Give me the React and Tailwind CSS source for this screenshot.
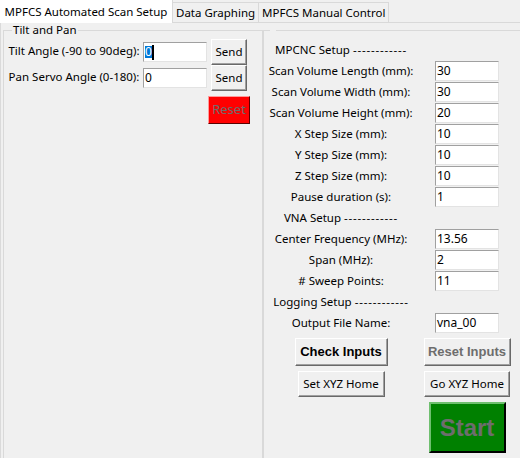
import React from "react";

const ui = "font-['Noto_Sans',sans-serif] text-[11.5px] text-black";

const Entry = ({ value, selected }) => (
  <div className="w-[64px] h-[20px] bg-white border border-[#a0a0a0] border-r-[#e3e3e3] border-b-[#e3e3e3] flex items-center pl-[1px] leading-none text-[12px]">
    {selected ? (
      <>
        <span className="bg-[#0078d7] text-white">{value}</span>
        <span className="w-[2px] h-[15px] bg-black" />
      </>
    ) : (
      <span>{value}</span>
    )}
  </div>
);

const TkButton = ({ children, className = "" }) => (
  <div
    className={`flex items-center justify-center bg-[#f0f0f0] border border-t-white border-l-white border-b-[#696969] border-r-[#696969] shadow-[inset_-1px_-1px_0_#a0a0a0] ${className}`}
  >
    {children}
  </div>
);

const Row = ({ label, value }) => (
  <div className="flex h-[21px]">
    <div className="w-[150px] text-center leading-[20px] whitespace-nowrap">{label}</div>
    <div className="w-[102px] flex justify-center">
      <Entry value={value} />
    </div>
  </div>
);

const Heading = ({ text }) => (
  <div className="flex h-[21px]">
    <div className="w-[150px] text-center leading-[20px] whitespace-nowrap">
      {text} <span className="tracking-[0.8px]">------------</span>
    </div>
  </div>
);

export default function App() {
  const tabs = ["Data Graphing", "MPFCS Manual Control"];

  return (
    <div className={`${ui} w-[520px] h-[458px] overflow-hidden bg-[#f0f0f0]`}>
      {/* tab strip */}
      <div className="flex h-[23px] border-b border-[#d9d9d9]">
        <div className="w-[173px] h-[23px] bg-white border-r border-[#d9d9d9] flex items-center justify-center -mb-px">
          MPFCS Automated Scan Setup
        </div>
        {tabs.map((t) => (
          <div
            key={t}
            className="mt-[2px] h-[20px] px-[3px] border-t border-r border-[#d9d9d9] bg-[#f0f0f0] flex items-center"
          >
            {t}
          </div>
        ))}
      </div>

      <div className="flex border-l border-[#dadada] pl-[2px] h-[440px]">
        {/* Tilt and Pan */}
        <fieldset className="w-[260px] h-[440px] border border-[#d9d9d9]">
          <legend className="ml-[8px] px-[1px] leading-[14px]">Tilt and Pan</legend>
          <div className="pl-[1px] pt-[2px]">
            <div className="flex h-[26px] items-start">
              <div className="w-[138px] text-center leading-[24px] whitespace-nowrap">Tilt Angle (-90 to 90deg):</div>
              <div className="w-[64px] pt-[3px]">
                <Entry value="0" selected />
              </div>
              <div className="w-[44px] flex justify-center">
                <TkButton className="w-[36px] h-[26px]">Send</TkButton>
              </div>
            </div>
            <div className="flex h-[26px] items-start">
              <div className="w-[138px] text-center leading-[24px] whitespace-nowrap">Pan Servo Angle (0-180):</div>
              <div className="w-[64px] pt-[3px]">
                <Entry value="0" />
              </div>
              <div className="w-[44px] flex justify-center">
                <TkButton className="w-[36px] h-[26px]">Send</TkButton>
              </div>
            </div>
            <div className="flex mt-[5px]">
              <div className="w-[202px]" />
              <div className="w-[44px] flex justify-center">
                <div className="w-[42px] h-[28px] bg-[#ff0000] border border-t-[#ff9a9a] border-l-[#ff9a9a] border-b-[#5a0000] border-r-[#5a0000] flex items-center justify-center text-[13px] text-[#6d6d6d]">
                  Reset
                </div>
              </div>
            </div>
          </div>
        </fieldset>

        {/* MPCNC / VNA / Logging */}
        <fieldset className="flex-1 h-[440px] border border-r-0 border-[#d9d9d9]">
          <legend className="ml-[6px] w-[6px] h-[14px]" />
          <div className="pl-[2px] pt-[3px]">
            <Heading text="MPCNC Setup" />
            <Row label="Scan Volume Length (mm):" value="30" />
            <Row label="Scan Volume Width (mm):" value="30" />
            <Row label="Scan Volume Height (mm):" value="20" />
            <Row label="X Step Size (mm):" value="10" />
            <Row label="Y Step Size (mm):" value="10" />
            <Row label="Z Step Size (mm):" value="10" />
            <Row label="Pause duration (s):" value="1" />
            <Heading text="VNA Setup" />
            <Row label="Center Frequency (MHz):" value="13.56" />
            <Row label="Span (MHz):" value="2" />
            <Row label="# Sweep Points:" value="11" />
            <Heading text="Logging Setup" />
            <Row label="Output File Name:" value="vna_00" />

            <div className="flex mt-[4px]">
              <div className="w-[150px] flex justify-center">
                <TkButton className="w-[93px] h-[28px] font-['Liberation_Sans',sans-serif] font-bold text-[13px]">
                  Check Inputs
                </TkButton>
              </div>
              <div className="w-[102px] flex justify-center">
                <TkButton className="w-[87px] h-[28px] font-['Liberation_Sans',sans-serif] font-bold text-[13px] text-[#6d6d6d]">
                  Reset Inputs
                </TkButton>
              </div>
            </div>
            <div className="flex mt-[5px]">
              <div className="w-[150px] flex justify-center">
                <TkButton className="w-[87px] h-[26px]">Set XYZ Home</TkButton>
              </div>
              <div className="w-[102px] flex justify-center">
                <TkButton className="w-[86px] h-[26px]">Go XYZ Home</TkButton>
              </div>
            </div>
            <div className="flex mt-[5px]">
              <div className="w-[150px]" />
              <div className="w-[102px] flex justify-center">
                <div className="w-[77px] h-[51px] bg-[#008000] border-2 border-t-[#6fbf6f] border-l-[#6fbf6f] border-b-black border-r-black flex items-center justify-center font-['Liberation_Sans',sans-serif] font-bold text-[24px] text-[#6d6d6d]">
                  Start
                </div>
              </div>
            </div>
          </div>
        </fieldset>
      </div>
    </div>
  );
}
